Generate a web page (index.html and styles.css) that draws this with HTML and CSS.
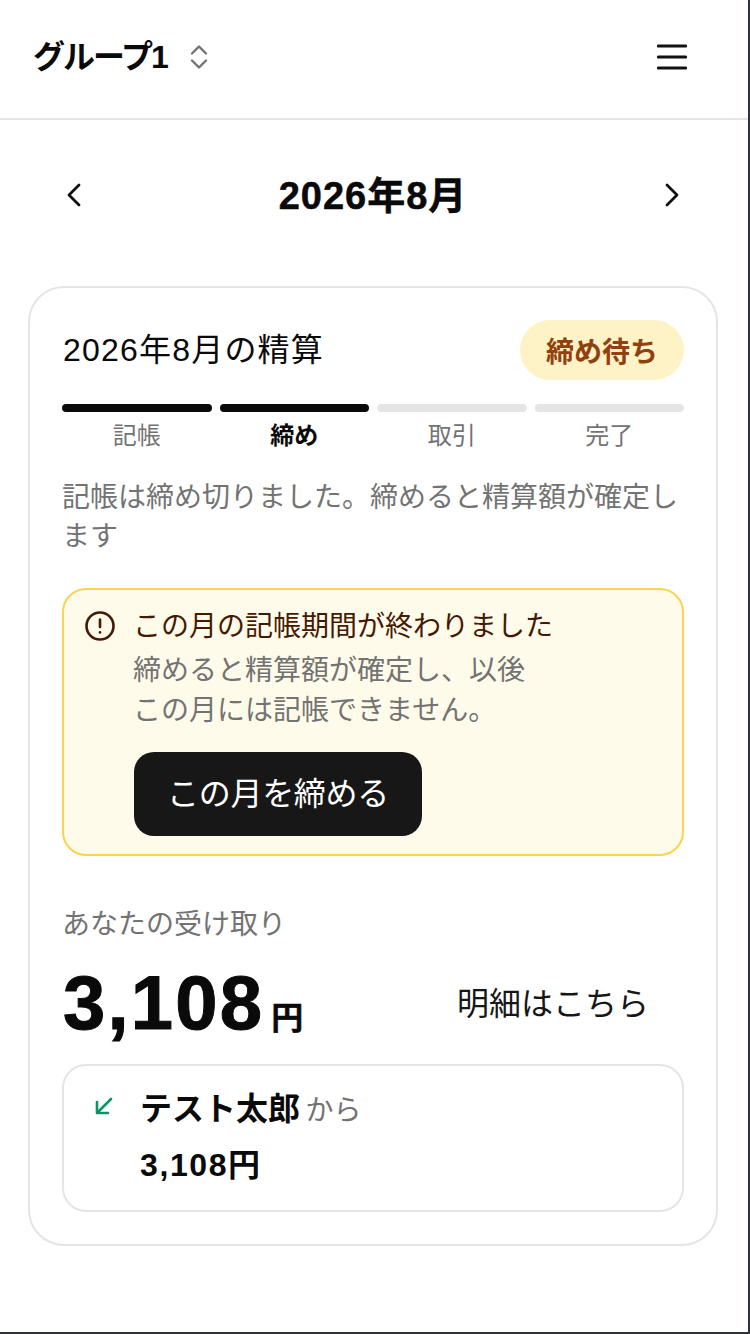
FILE: index.html
```html
<!DOCTYPE html>
<html lang="ja">
<head>
    <meta charset="UTF-8">
    <meta name="viewport" content="width=device-width, initial-scale=1.0">
    <title>グループ1 精算</title>
    <link rel="stylesheet" href="styles.css">
</head>
<body>

    <div class="screen">
        <header class="top_bar">
            <div class="group_name">
                <span>グループ1</span>
                <svg class="updown" width="20" height="26" viewBox="0 0 20 26" fill="none" stroke="#737373" stroke-width="2.4" stroke-linecap="round" stroke-linejoin="round">
                    <path d="M3 9.5 10 2.5 17 9.5"/>
                    <path d="M3 16.5 10 23.5 17 16.5"/>
                </svg>
            </div>
            <svg class="menu" width="30" height="26" viewBox="0 0 30 26" fill="none" stroke="#111" stroke-width="3.2" stroke-linecap="round">
                <path d="M1.5 2H28.5"/>
                <path d="M1.5 13H28.5"/>
                <path d="M1.5 24H28.5"/>
            </svg>
        </header>

        <nav class="month_nav">
            <svg width="14" height="24" viewBox="0 0 14 24" fill="none" stroke="#111" stroke-width="2.8" stroke-linecap="round" stroke-linejoin="round"><path d="M12 2 2 12 12 22"/></svg>
            <h1>2026年8月</h1>
            <svg width="14" height="24" viewBox="0 0 14 24" fill="none" stroke="#111" stroke-width="2.8" stroke-linecap="round" stroke-linejoin="round"><path d="M2 2 12 12 2 22"/></svg>
        </nav>

        <section class="card">
            <div class="card_head">
                <h2>2026年8月の精算</h2>
                <span class="badge">締め待ち</span>
            </div>

            <div class="steps">
                <div class="step done"><div class="bar"></div>記帳</div>
                <div class="step done current"><div class="bar"></div>締め</div>
                <div class="step"><div class="bar"></div>取引</div>
                <div class="step"><div class="bar"></div>完了</div>
            </div>

            <p class="description">記帳は締め切りました。締めると精算額が確定します</p>

            <div class="alert">
                <svg class="alert_icon" width="32" height="32" viewBox="0 0 32 32" fill="none" stroke="#451a03" stroke-width="2.6" stroke-linecap="round">
                    <circle cx="16" cy="16" r="13.5"/>
                    <path d="M16 9.5V17"/>
                    <path d="M16 22.2V22.4"/>
                </svg>
                <div class="alert_body">
                    <div class="alert_title">この月の記帳期間が終わりました</div>
                    <p class="alert_text">締めると精算額が確定し、以後<br>この月には記帳できません。</p>
                    <button class="close_button">この月を締める</button>
                </div>
            </div>

            <div class="receive_label">あなたの受け取り</div>
            <div class="receive_row">
                <div class="amount">3,108<span class="yen">円</span></div>
                <span class="detail_link">明細はこちら</span>
            </div>

            <div class="payment">
                <svg class="arrow" width="18" height="18" viewBox="0 0 18 18" fill="none" stroke="#059669" stroke-width="2.6" stroke-linecap="round" stroke-linejoin="round">
                    <path d="M16 2 2.5 15.5"/>
                    <path d="M2 5V16H13"/>
                </svg>
                <div>
                    <div class="payer"><strong>テスト太郎</strong> <span>から</span></div>
                    <div class="payment_amount">3,108円</div>
                </div>
            </div>
        </section>
    </div>

</body>
</html>
```

FILE: styles.css
```css
* {
    box-sizing: border-box;
}
body {
    margin: 0;
    font-family: "Liberation Sans", "Noto Sans CJK JP", sans-serif;
    color: #0a0a0a;
    background-color: #fff;
}
.screen {
    width: 750px;
    height: 1334px;
    border-right: 2px solid #2f3238;
    border-bottom: 2px solid #2f3238;
    overflow: hidden;
}
.top_bar {
    height: 120px;
    padding: 0 61px 4px 33px;
    display: flex;
    justify-content: space-between;
    align-items: center;
    border-bottom: 2px solid #e5e5e5;
}
.group_name {
    display: flex;
    align-items: center;
    gap: 22px;
    font-size: 32px;
    font-weight: 700;
    letter-spacing: -2px;
}
.group_name span {
    margin-bottom: 6px;
}
.month_nav {
    height: 150px;
    padding: 0 69px 0 67px;
    display: flex;
    justify-content: space-between;
    align-items: center;
}
.month_nav h1 {
    margin: 0 0 6px;
    font-size: 38px;
    font-weight: 700;
    letter-spacing: 1px;
    -webkit-text-stroke: 0.5px #0a0a0a;
}
.card {
    width: 690px;
    height: 960px;
    margin: 16px 0 0 28px;
    padding: 32px 32px 0 32px;
    border: 2px solid #e5e5e5;
    border-radius: 36px;
}
.card_head {
    display: flex;
    justify-content: space-between;
    align-items: center;
}
.card_head h2 {
    margin: 0 0 6px 1px;
    font-size: 32px;
    font-weight: 400;
    letter-spacing: 1.2px;
}
.badge {
    height: 60px;
    padding: 0 26px;
    display: flex;
    align-items: center;
    font-size: 28px;
    font-weight: 700;
    color: #92400e;
    background-color: #fef3c7;
    border-radius: 30px;
}
.steps {
    margin-top: 24px;
    display: grid;
    grid-template-columns: repeat(4, 1fr);
    gap: 8px;
}
.step {
    text-align: center;
    font-size: 24px;
    line-height: 30px;
    color: #737373;
}
.bar {
    height: 8px;
    margin-bottom: 9px;
    border-radius: 4px;
    background-color: #e5e5e5;
}
.step.done .bar {
    background-color: #0a0a0a;
}
.step.current {
    color: #0a0a0a;
    font-weight: 700;
}
.description {
    margin: 27px 0 0;
    font-size: 28px;
    line-height: 39px;
    color: #737373;
}
.alert {
    height: 268px;
    margin-top: 32px;
    padding: 19px 20px 0 20px;
    display: flex;
    gap: 17px;
    background-color: #fffbeb;
    border: 2px solid #fcd34d;
    border-radius: 24px;
}
.alert_icon {
    flex-shrink: 0;
    margin-top: 1px;
}
.alert_title {
    font-size: 28px;
    line-height: 36px;
    color: #451a03;
}
.alert_text {
    margin: 6px 0 0;
    font-size: 28px;
    line-height: 40px;
    color: #737373;
}
.close_button {
    display: block;
    width: 288px;
    height: 84px;
    margin: 21px 0 0 1px;
    padding: 0 0 6px;
    border: none;
    border-radius: 20px;
    background-color: #171717;
    color: #fff;
    font-family: inherit;
    font-size: 32px;
    letter-spacing: -0.3px;
}
.receive_label {
    margin-top: 51px;
    font-size: 28px;
    line-height: 36px;
    color: #737373;
}
.receive_row {
    height: 76px;
    margin-top: 22px;
    padding-right: 35px;
    display: flex;
    justify-content: space-between;
    align-items: center;
}
.amount {
    margin-left: 1px;
    font-size: 76px;
    line-height: 76px;
    font-weight: 700;
    letter-spacing: 2.2px;
    -webkit-text-stroke: 1px #0a0a0a;
}
.yen {
    margin-left: 7px;
    font-size: 32px;
    line-height: 1;
    letter-spacing: 0;
    -webkit-text-stroke: 0.5px #0a0a0a;
}
.detail_link {
    margin-bottom: 5px;
    font-size: 32px;
    color: #171717;
}
.payment {
    height: 148px;
    margin-top: 23px;
    padding: 21px 30px 0 31px;
    display: flex;
    gap: 27px;
    border: 2px solid #e5e5e5;
    border-radius: 24px;
}
.arrow {
    flex-shrink: 0;
    margin-top: 10px;
}
.payer {
    line-height: 44px;
}
.payer strong {
    font-size: 32px;
}
.payer span {
    margin-left: 1px;
    font-size: 28px;
    color: #737373;
}
.payment_amount {
    margin-top: 2px;
    font-size: 32px;
    font-weight: 700;
    letter-spacing: 1.6px;
}
```
